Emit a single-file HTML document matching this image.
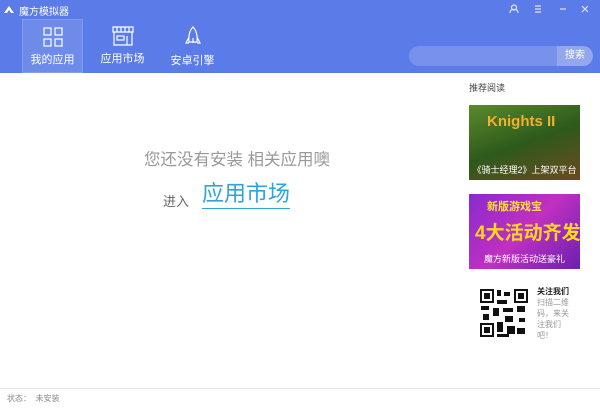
<!DOCTYPE html>
<html><head><meta charset="utf-8"><style>
*{margin:0;padding:0;box-sizing:border-box}
body{width:600px;height:410px;overflow:hidden;background:#fff;font-family:"Liberation Sans","Noto Sans CJK SC",sans-serif;position:relative}
.hd{position:absolute;left:0;top:0;width:600px;height:73px;background:#5b7be8}
.t{position:absolute;color:#fff;font-size:10px}
.tab{position:absolute;top:19px;height:54px;width:61px;text-align:center;color:#fff;font-size:11px}
.tab svg{display:block;margin:7px auto 4px}
.abs{position:absolute;white-space:nowrap}
</style></head><body>
<div class="hd">
 <svg class="abs" style="left:3px;top:4px" width="14" height="10"><path d="M1 9 L6 2 L11 9 L8 9 L6 6 L4 9Z" fill="#fff"/></svg>
 <div class="t" style="left:19px;top:3px">魔方模拟器</div>
 <svg class="abs" style="left:508px;top:4px" width="80" height="10" stroke="#dfe6fb" fill="none" stroke-width="1.2">
  <circle cx="6" cy="3.5" r="2.5"/><path d="M2 9 Q2 5 6 5.5 Q10 5 10 9"/>
  <path d="M27 2h6M27 5h6M27 8h6"/>
  <path d="M52 5h6"/>
  <path d="M74 2l6 6M80 2l-6 6"/>
 </svg>
 <div class="tab" style="left:22px;background:rgba(255,255,255,0.12);border:1px solid rgba(255,255,255,0.15)">
  <svg width="20" height="20" stroke="#fff" fill="none" stroke-width="1.2"><rect x="1" y="1" width="7" height="7"/><rect x="12" y="1" width="7" height="7"/><rect x="1" y="12" width="7" height="7"/><rect x="12" y="12" width="7" height="7"/></svg>我的应用</div>
 <div class="tab" style="left:92px">
  <svg width="24" height="20" stroke="#fff" fill="none" stroke-width="1.2"><path d="M2 1h20v5H2z M6 1v5M10 1v5M14 1v5M18 1v5 M3 6v13h18V6"/><rect x="6" y="10" width="7" height="4"/><path d="M16 10v9"/></svg>应用市场</div>
 <div class="tab" style="left:162px">
  <svg width="20" height="22" stroke="#fff" fill="none" stroke-width="1.2"><path d="M10 1 Q15 6 14 16 H6 Q5 6 10 1Z M6 11 L3 17 L6 17 M14 11 L17 17 L14 17 M10 12v5"/></svg>安卓引擎</div>
 <div class="abs" style="left:409px;top:46px;width:184px;height:20px;border-radius:10px;background:rgba(255,255,255,0.18);overflow:hidden">
  <div class="abs" style="right:0;top:0;width:36px;height:20px;background:rgba(255,255,255,0.2);color:#fff;font-size:10px;line-height:20px;text-align:center">搜索</div>
 </div>
</div>
<div class="abs" style="left:0;top:146px;width:474px;text-align:center;color:#999;font-size:16.5px">您还没有安装 相关应用噢</div>
<div class="abs" style="left:163px;top:191px;color:#666;font-size:13px">进入</div>
<div class="abs" style="left:202px;top:180px;color:#2ea4d8;font-size:22px;border-bottom:1px solid #2ea4d8;line-height:28px">应用市场</div>
<div class="abs" style="left:469px;top:81px;color:#444;font-size:9px">推荐阅读</div>
<div class="abs" style="left:469px;top:105px;width:111px;height:75px;overflow:hidden;background:linear-gradient(160deg,#5c8a2a,#2e5a1c 50%,#6b4a20)">
 <div class="abs" style="left:18px;top:8px;color:#f0b030;font-size:15px;font-weight:bold">Knights II</div>
 <div class="abs" style="left:0;bottom:4px;width:111px;text-align:center;color:#fff;font-size:9px">《骑士经理2》上架双平台</div></div>
<div class="abs" style="left:469px;top:194px;width:111px;height:75px;overflow:hidden;background:linear-gradient(135deg,#8a2ad0,#c030c0 50%,#6a20b0)">
 <div class="abs" style="left:18px;top:4px;color:#ffe040;font-size:11px;font-weight:bold">新版游戏宝</div>
 <div class="abs" style="left:6px;top:24px;color:#ffd820;font-size:19px;font-weight:bold">4大活动齐发</div>
 <div class="abs" style="left:0;bottom:4px;width:111px;text-align:center;color:#fff;font-size:9px">魔方新版活动送豪礼</div></div>
<svg class="abs" style="left:479px;top:288px" width="50" height="50">
 <rect width="50" height="50" fill="#fff"/>
 <g fill="#111"><rect x="1" y="1" width="14" height="14"/><rect x="35" y="1" width="14" height="14"/><rect x="1" y="35" width="14" height="14"/></g>
 <g fill="#fff"><rect x="3" y="3" width="10" height="10"/><rect x="37" y="3" width="10" height="10"/><rect x="3" y="37" width="10" height="10"/></g>
 <g fill="#111"><rect x="5" y="5" width="6" height="6"/><rect x="39" y="5" width="6" height="6"/><rect x="5" y="39" width="6" height="6"/>
 <rect x="18" y="2" width="4" height="6"/><rect x="25" y="4" width="6" height="4"/><rect x="18" y="12" width="10" height="4"/><rect x="2" y="18" width="8" height="4"/><rect x="14" y="20" width="6" height="8"/><rect x="24" y="20" width="10" height="4"/><rect x="38" y="18" width="8" height="6"/><rect x="4" y="26" width="6" height="6"/><rect x="26" y="28" width="8" height="6"/><rect x="40" y="30" width="6" height="4"/><rect x="18" y="34" width="6" height="10"/><rect x="28" y="38" width="8" height="8"/><rect x="38" y="40" width="8" height="6"/><rect x="18" y="46" width="12" height="3"/></g>
</svg>
<div class="abs" style="left:537px;top:286px;color:#222;font-size:8px;font-weight:bold">关注我们</div>
<div class="abs" style="left:537px;top:297px;color:#999;font-size:8px;line-height:11px">扫描二维<br>码，来关<br>注我们<br>吧！</div>
<div class="abs" style="left:0;top:388px;width:600px;height:1px;background:#e6e6e6"></div>
<div class="abs" style="left:7px;top:393px;color:#888;font-size:8px">状态：&nbsp; 未安装</div>
</body></html>
